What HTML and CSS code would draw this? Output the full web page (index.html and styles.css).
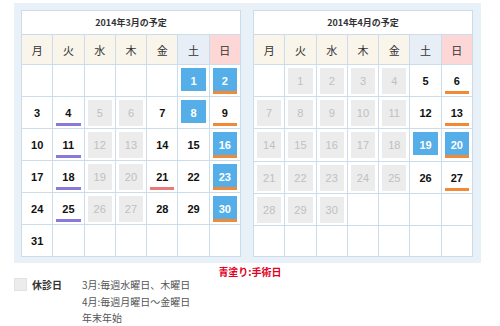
FILE: index.html
```html
<!DOCTYPE html>
<html lang="ja">
<head>
<meta charset="utf-8">
<link rel="stylesheet" href="styles.css">
</head>
<body>
<div class="page">
  <div class="panel">
    <table class="cal">
      <tr><th class="title" colspan="7">2014年3月の予定</th></tr>
      <tr class="wk"><th>月</th><th>火</th><th>水</th><th>木</th><th>金</th><th class="sat">土</th><th class="sun">日</th></tr>
      <tr><td></td><td></td><td></td><td></td><td></td><td><div class="d blue">1</div></td><td><div class="d blue ul-o">2</div></td></tr>
      <tr><td><div class="d">3</div></td><td><div class="d ul-p">4</div></td><td><div class="d off">5</div></td><td><div class="d off">6</div></td><td><div class="d">7</div></td><td><div class="d blue">8</div></td><td><div class="d ul-o">9</div></td></tr>
      <tr><td><div class="d">10</div></td><td><div class="d ul-p">11</div></td><td><div class="d off">12</div></td><td><div class="d off">13</div></td><td><div class="d">14</div></td><td><div class="d">15</div></td><td><div class="d blue ul-o">16</div></td></tr>
      <tr><td><div class="d">17</div></td><td><div class="d ul-p">18</div></td><td><div class="d off">19</div></td><td><div class="d off">20</div></td><td><div class="d ul-r">21</div></td><td><div class="d">22</div></td><td><div class="d blue ul-o">23</div></td></tr>
      <tr><td><div class="d">24</div></td><td><div class="d ul-p">25</div></td><td><div class="d off">26</div></td><td><div class="d off">27</div></td><td><div class="d">28</div></td><td><div class="d">29</div></td><td><div class="d blue ul-o">30</div></td></tr>
      <tr><td><div class="d">31</div></td><td></td><td></td><td></td><td></td><td></td><td></td></tr>
    </table>
    <table class="cal">
      <tr><th class="title" colspan="7">2014年4月の予定</th></tr>
      <tr class="wk"><th>月</th><th>火</th><th>水</th><th>木</th><th>金</th><th class="sat">土</th><th class="sun">日</th></tr>
      <tr><td></td><td><div class="d off">1</div></td><td><div class="d off">2</div></td><td><div class="d off">3</div></td><td><div class="d off">4</div></td><td><div class="d">5</div></td><td><div class="d ul-o">6</div></td></tr>
      <tr><td><div class="d off">7</div></td><td><div class="d off">8</div></td><td><div class="d off">9</div></td><td><div class="d off">10</div></td><td><div class="d off">11</div></td><td><div class="d">12</div></td><td><div class="d ul-o">13</div></td></tr>
      <tr><td><div class="d off">14</div></td><td><div class="d off">15</div></td><td><div class="d off">16</div></td><td><div class="d off">17</div></td><td><div class="d off">18</div></td><td><div class="d blue">19</div></td><td><div class="d blue ul-o">20</div></td></tr>
      <tr><td><div class="d off">21</div></td><td><div class="d off">22</div></td><td><div class="d off">23</div></td><td><div class="d off">24</div></td><td><div class="d off">25</div></td><td><div class="d">26</div></td><td><div class="d ul-o">27</div></td></tr>
      <tr><td><div class="d off">28</div></td><td><div class="d off">29</div></td><td><div class="d off">30</div></td><td></td><td></td><td></td><td></td></tr>
      <tr><td></td><td></td><td></td><td></td><td></td><td></td><td></td></tr>
    </table>
  </div>
  <p class="note">青塗り:手術日</p>
  <div class="legend">
    <span class="swatch"></span>
    <span class="label">休診日</span>
    <div class="desc">
      <div>3月:毎週水曜日、木曜日</div>
      <div>4月:毎週月曜日～金曜日</div>
      <div class="last">年末年始</div>
    </div>
  </div>
</div>
</body>
</html>
```
FILE: styles.css
```css
html, body {
  margin: 0;
  padding: 0;
  background: #ffffff;
}
body {
  font-family: "Liberation Sans", "Noto Sans CJK JP", sans-serif;
  color: #222;
}
.page {
  width: 500px;
  padding: 3px 0 0 14px;
  box-sizing: border-box;
}
.panel {
  display: flex;
  gap: 12px;
  width: 467px;
  box-sizing: border-box;
  padding: 7px 7px 6px 7px;
  background: #e8f0f8;
}
.cal {
  width: 220px;
  table-layout: fixed;
  border-collapse: collapse;
  background: #ffffff;
}
.cal th, .cal td {
  border: 1px solid #cddcea;
  padding: 0;
  text-align: center;
}
.cal .title {
  height: 23px;
  font-family: "Noto Sans CJK JP", sans-serif;
  font-size: 9px;
  font-weight: bold;
  color: #333;
  background: #ffffff;
}
.wk th {
  height: 29px;
  font-family: "Noto Sans CJK JP", sans-serif;
  font-size: 11px;
  font-weight: normal;
  color: #333;
  background: #f9f5eb;
}
.wk th.sat { background: #e7eef5; }
.wk th.sun { background: #fdd6d6; }
.cal td {
  height: 31px;
  padding: 3px 3px 2px 3px;
  box-sizing: border-box;
  vertical-align: top;
}
.d {
  height: 26px;
  box-sizing: border-box;
  border-bottom: 3px solid transparent;
  display: flex;
  align-items: center;
  justify-content: center;
  padding-top: 3px;
  font-size: 11px;
  font-weight: bold;
  color: #111;
}
.d.blue {
  background: #55aee8;
  background-clip: padding-box;
  color: #ffffff;
}
.d.off {
  background: #ececec;
  color: #c0c0c0;
  font-weight: normal;
}
.d.ul-o { border-bottom-color: #f08a36; }
.d.ul-p { border-bottom-color: #8a7ad8; }
.d.ul-r { border-bottom-color: #e87a7c; }
.note {
  margin: 3px 0 0 0;
  width: 472px;
  text-align: center;
  font-family: "Noto Sans CJK JP", sans-serif;
  font-size: 10px;
  line-height: 12px;
  font-weight: bold;
  color: #e3001e;
}
.legend {
  display: flex;
  align-items: flex-start;
  margin-top: -2px;
  font-family: "Noto Sans CJK JP", sans-serif;
  font-size: 10px;
  line-height: 17px;
  color: #555;
}
.swatch {
  width: 13px;
  height: 13px;
  margin-top: 2px;
  background: #ececec;
  box-sizing: border-box;
  border: 1px solid #e2e2e2;
}
.label {
  margin-left: 5px;
  width: 50px;
  font-weight: bold;
  color: #333;
}
.desc div {
  white-space: nowrap;
}
.desc .last {
  line-height: 15px;
}
```
